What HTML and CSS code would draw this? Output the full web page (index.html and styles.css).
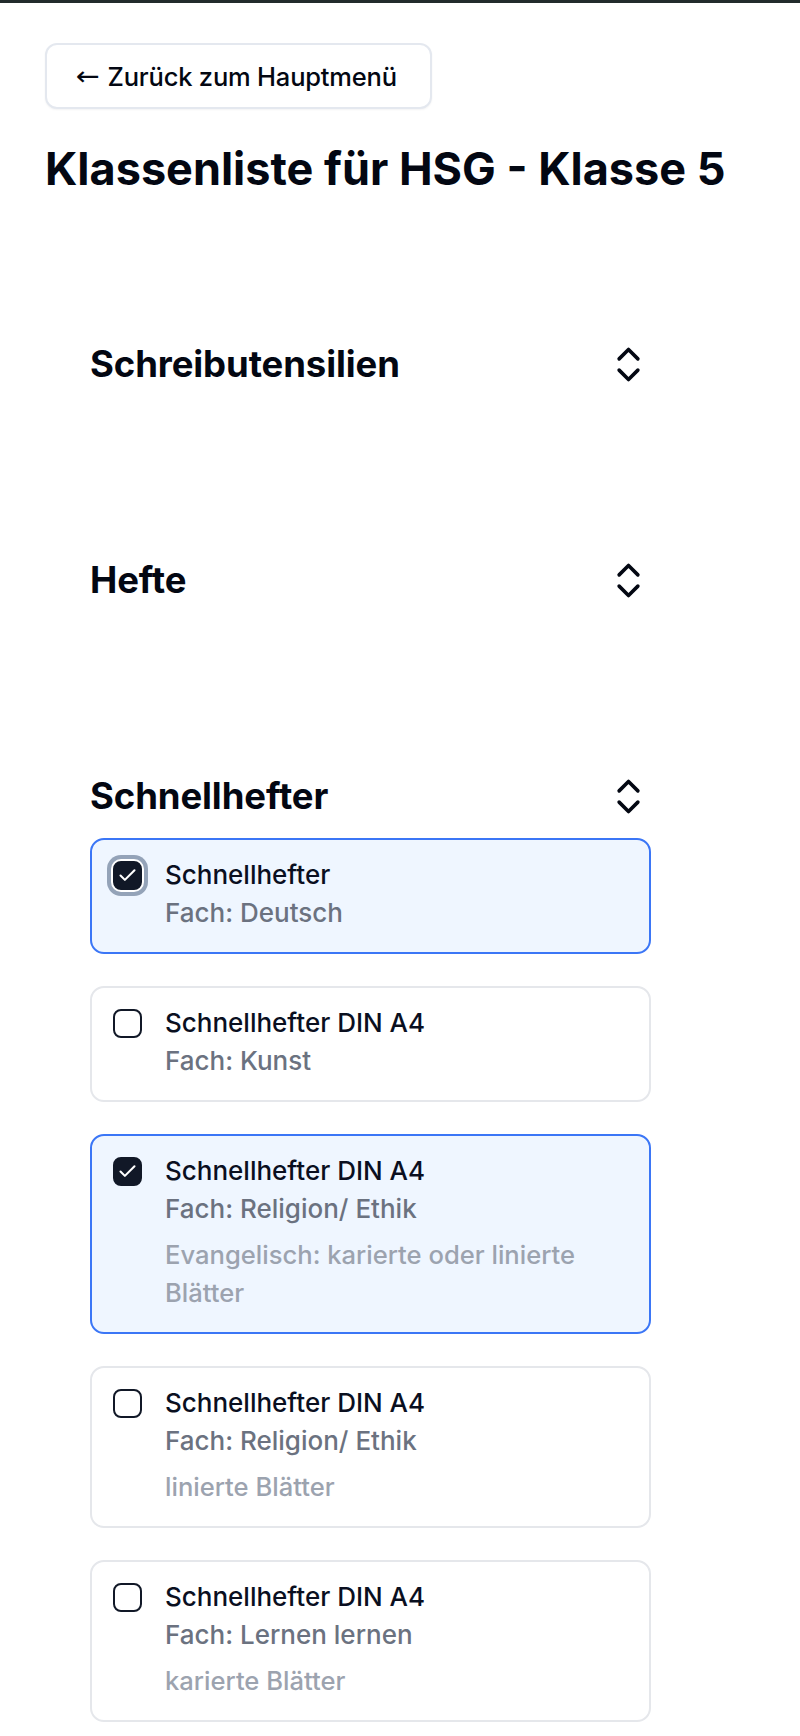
FILE: index.html
```html
<!DOCTYPE html>
<html lang="de">
<head>
<meta charset="utf-8">
<title>Klassenliste für HSG - Klasse 5</title>
<link rel="stylesheet" href="styles.css">
</head>
<body>
<div class="topbar"></div>
<main class="page">
  <button class="back-btn" type="button"><span class="arrow">←</span>Zurück zum Hauptmenü</button>
  <h1 class="title">Klassenliste für HSG - Klasse 5</h1>

  <div class="sections">
    <section class="section">
      <div class="section-head">
        <h2 class="section-title">Schreibutensilien</h2>
        <svg class="chev" viewBox="0 0 24 24" fill="none" stroke="currentColor" stroke-width="1.9" stroke-linecap="round" stroke-linejoin="round"><path d="m7 15 5 5 5-5"/><path d="m7 9 5-5 5 5"/></svg>
      </div>
    </section>

    <section class="section">
      <div class="section-head">
        <h2 class="section-title">Hefte</h2>
        <svg class="chev" viewBox="0 0 24 24" fill="none" stroke="currentColor" stroke-width="1.9" stroke-linecap="round" stroke-linejoin="round"><path d="m7 15 5 5 5-5"/><path d="m7 9 5-5 5 5"/></svg>
      </div>
    </section>

    <section class="section open">
      <div class="section-head">
        <h2 class="section-title">Schnellhefter</h2>
        <svg class="chev" viewBox="0 0 24 24" fill="none" stroke="currentColor" stroke-width="1.9" stroke-linecap="round" stroke-linejoin="round"><path d="m7 15 5 5 5-5"/><path d="m7 9 5-5 5 5"/></svg>
      </div>
      <div class="cards">
        <label class="card selected">
          <span class="box checked focus"><svg viewBox="0 0 24 24" fill="none" stroke="#fff" stroke-width="2.4" stroke-linecap="round" stroke-linejoin="round"><path d="M20 6 9 17l-5-5"/></svg></span>
          <span class="info">
            <span class="name">Schnellhefter</span>
            <span class="subject">Fach: Deutsch</span>
          </span>
        </label>

        <label class="card">
          <span class="box"></span>
          <span class="info">
            <span class="name">Schnellhefter DIN A4</span>
            <span class="subject">Fach: Kunst</span>
          </span>
        </label>

        <label class="card selected">
          <span class="box checked"><svg viewBox="0 0 24 24" fill="none" stroke="#fff" stroke-width="2.4" stroke-linecap="round" stroke-linejoin="round"><path d="M20 6 9 17l-5-5"/></svg></span>
          <span class="info">
            <span class="name">Schnellhefter DIN A4</span>
            <span class="subject">Fach: Religion/ Ethik</span>
            <span class="note">Evangelisch: karierte oder linierte Blätter</span>
          </span>
        </label>

        <label class="card">
          <span class="box"></span>
          <span class="info">
            <span class="name">Schnellhefter DIN A4</span>
            <span class="subject">Fach: Religion/ Ethik</span>
            <span class="note">linierte Blätter</span>
          </span>
        </label>

        <label class="card">
          <span class="box"></span>
          <span class="info">
            <span class="name">Schnellhefter DIN A4</span>
            <span class="subject">Fach: Lernen lernen</span>
            <span class="note">karierte Blätter</span>
          </span>
        </label>
      </div>
    </section>
  </div>
</main>
</body>
</html>
```

FILE: styles.css
```css
* { box-sizing: border-box; }

html, body {
  margin: 0;
  padding: 0;
  background: #ffffff;
}

body {
  font-family: Inter, "Noto Sans", "Liberation Sans", sans-serif;
  color: #030712;
}

.topbar {
  height: 3px;
  background: #222b2c;
}

.page {
  padding: 40px 45px 0 45px;
}

.back-btn {
  display: inline-flex;
  align-items: center;
  height: 66px;
  width: 387px;
  padding: 0 0 0 30px;
  font-family: inherit;
  font-size: 25.5px;
  font-weight: 500;
  color: #030712;
  background: #ffffff;
  border: 2px solid #e4e8ef;
  border-radius: 12px;
  box-shadow: 0 1px 2px rgba(15, 23, 42, 0.05);
  letter-spacing: -0.2px;
}

.arrow {
  font-family: "DejaVu Sans", sans-serif;
  font-size: 26px;
  font-weight: 400;
  margin-right: 9px;
  transform: scaleX(1.1);
}

.title {
  margin: 33px 0 0 0;
  font-size: 45px;
  line-height: 53px;
  font-weight: 700;
  color: #030712;
}

.sections {
  margin: 61px 0 0 45px;
  width: 561px;
}

.section {
  padding: 81px 0;
}

.section.open {
  padding-bottom: 0;
}

.section-head {
  display: flex;
  align-items: center;
  justify-content: space-between;
  height: 54px;
}

.section-title {
  margin: 0;
  font-size: 36.5px;
  line-height: 54px;
  font-weight: 700;
  letter-spacing: -0.1px;
  color: #030712;
}

.chev {
  width: 45px;
  height: 45px;
  color: #030712;
  flex: none;
}

.cards {
  margin-top: 15px;
  display: flex;
  flex-direction: column;
  gap: 32px;
}

.card {
  display: flex;
  align-items: flex-start;
  gap: 23px;
  padding: 16px 20px 20px 21px;
  border: 2px solid #e5e7eb;
  border-radius: 14px;
  background: #ffffff;
}

.card.selected {
  border-color: #3b76f6;
  background: #eff6ff;
}

.box {
  flex: none;
  width: 29px;
  height: 29px;
  margin-top: 4.5px;
  border: 2px solid #111827;
  border-radius: 8px;
  background: #ffffff;
  display: flex;
  align-items: center;
  justify-content: center;
}

.box.checked {
  background: #111827;
  border-color: #111827;
}

.box.focus {
  box-shadow: 0 0 0 2px #ffffff, 0 0 0 6px #94a3b8;
}

.box svg {
  width: 21px;
  height: 21px;
}

.info {
  display: flex;
  flex-direction: column;
  min-width: 0;
}

.name {
  font-size: 26px;
  line-height: 38px;
  font-weight: 500;
  color: #0a0f1f;
}

.subject {
  font-size: 26px;
  line-height: 38px;
  font-weight: 500;
  color: #6b7280;
}

.note {
  margin-top: 8px;
  font-size: 25.6px;
  line-height: 38px;
  font-weight: 500;
  color: #9ca3af;
}
```
